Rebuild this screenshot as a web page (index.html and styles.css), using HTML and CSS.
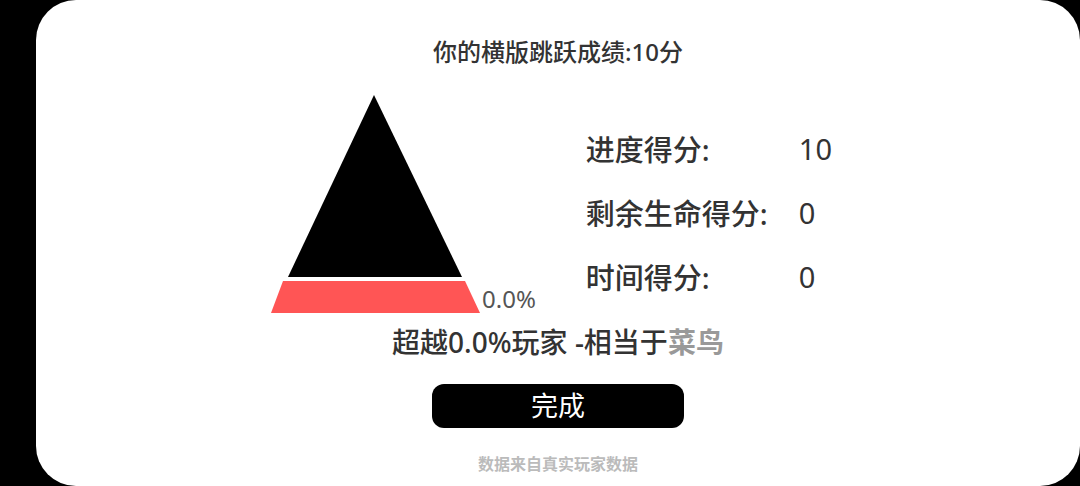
FILE: index.html
```html
<!DOCTYPE html>
<html lang="zh-CN">
<head>
<meta charset="utf-8">
<title>成绩</title>
<link rel="stylesheet" href="styles.css">
</head>
<body>
<div class="card">
  <div class="title">你的横版跳跃成绩:10分</div>
  <div class="middle">
    <div class="chart">
      <svg class="pyramid" width="211" height="220" viewBox="0 0 211 220">
        <polygon points="104,1 192,183 18,183" fill="#000"/>
        <polygon points="13,187 195,187 210,219 1,219" fill="#ff5555"/>
      </svg>
      <span class="pct">0.0%</span>
    </div>
    <div class="stats">
      <div class="label">进度得分:</div><div class="value">10</div>
      <div class="label">剩余生命得分:</div><div class="value">0</div>
      <div class="label">时间得分:</div><div class="value">0</div>
    </div>
  </div>
  <div class="rank">超越0.0%玩家 -相当于<span class="level">菜鸟</span></div>
  <button class="done">完成</button>
  <div class="source">数据来自真实玩家数据</div>
</div>
</body>
</html>
```
FILE: styles.css
```css
html, body {
  margin: 0;
  padding: 0;
  background: #000;
  width: 1080px;
  height: 486px;
  overflow: hidden;
  font-family: "Noto Sans", "Noto Sans CJK SC", sans-serif;
}
.card {
  margin-left: 36px;
  width: 1044px;
  height: 486px;
  background: #fff;
  border-radius: 40px;
  display: flex;
  flex-direction: column;
  align-items: center;
  padding-top: 36px;
  box-sizing: border-box;
}
.title {
  font-size: 24px;
  line-height: 32px;
  font-weight: 500;
  color: #333;
}
.middle {
  align-self: flex-start;
  margin-left: 234px;
  margin-top: 26px;
  display: flex;
  align-items: flex-start;
}
.chart {
  display: flex;
  align-items: flex-end;
}
.pyramid {
  display: block;
}
.pct {
  font-size: 24px;
  line-height: 24px;
  color: #555;
  margin-left: 1px;
  margin-bottom: 3px;
}
.stats {
  margin-left: 50px;
  margin-top: 22px;
  display: grid;
  grid-template-columns: 213px auto;
  grid-auto-rows: 64px;
  align-items: center;
  font-size: 29px;
  font-weight: 500;
  color: #333;
}
.value {
  font-weight: 400;
}
.rank {
  margin-top: 10px;
  font-size: 28px;
  line-height: 36px;
  font-weight: 500;
  color: #333;
}
.level {
  color: #999;
  font-weight: 700;
}
.done {
  margin-top: 24px;
  width: 252px;
  height: 44px;
  border: none;
  border-radius: 12px;
  background: #000;
  color: #fff;
  font-family: "Noto Sans", "Noto Sans CJK SC", sans-serif;
  font-size: 27px;
  line-height: 44px;
  padding: 0;
}
.source {
  margin-top: 25px;
  font-size: 16px;
  line-height: 22px;
  font-weight: 700;
  color: #bbb;
}
```
